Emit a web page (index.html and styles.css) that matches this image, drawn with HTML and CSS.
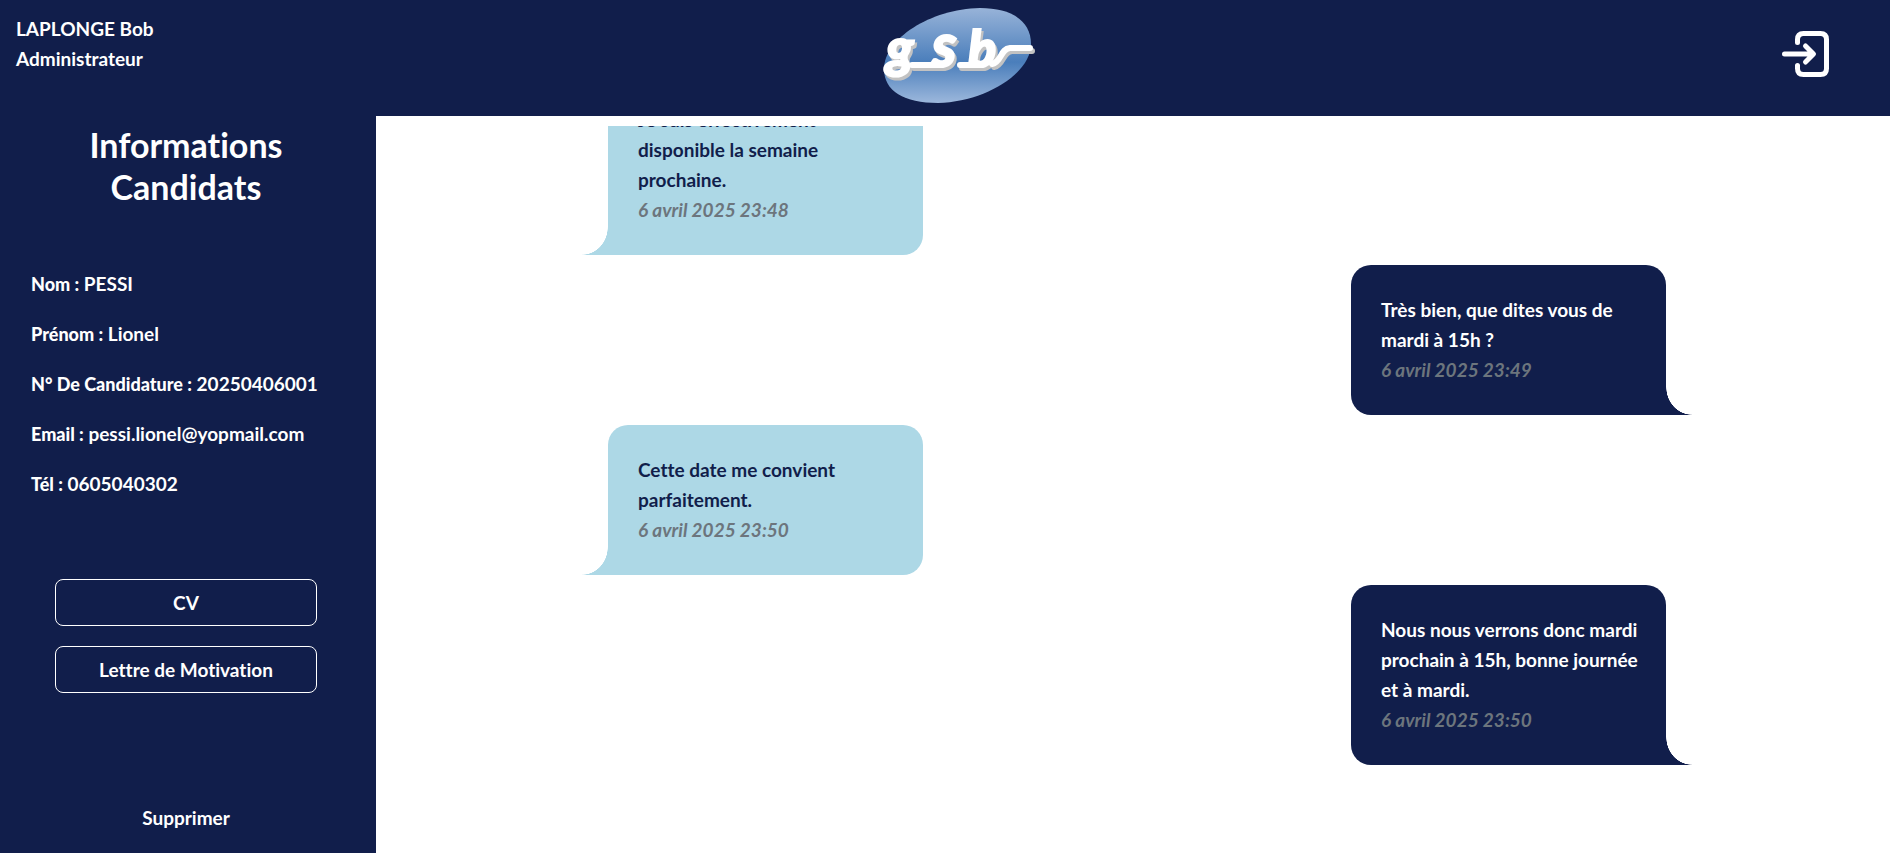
FILE: index.html
```html
<!DOCTYPE html>
<html lang="fr">
<head>
<meta charset="utf-8">
<title>GSB - Candidature</title>
<link rel="stylesheet" href="styles.css">
</head>
<body>
<header class="topbar">
  <div class="user">
    <p>LAPLONGE Bob</p>
    <p>Administrateur</p>
  </div>
  <a class="logo" href="#" aria-label="Accueil">
    <svg width="156" height="100" viewBox="0 0 156 100">
      <defs>
        <linearGradient id="oval" gradientUnits="userSpaceOnUse" x1="0" y1="3" x2="0" y2="98">
          <stop offset="0" stop-color="#99b4d9"/>
          <stop offset=".58" stop-color="#4a7ebb"/>
          <stop offset="1" stop-color="#9ab6db"/>
        </linearGradient>
        <filter id="relief" x="-10%" y="-10%" width="120%" height="130%">
          <feDropShadow dx="2" dy="3" stdDeviation="0" flood-color="#c2c2c2"/>
        </filter>
      </defs>
      <path d="M4 65C4 35 50 5 100 4C132 4 151 17 151 40C151 70 104 98 58 99C24 99 4 87 4 65Z" fill="url(#oval)"/>
      <g filter="url(#relief)">
        <path class="swash" d="M32 61H62M80 61H102"/>
        <path class="swash" d="M112 60C122 58 120 45 130 44H150"/>
        <text class="logo-text" y="63"><tspan class="logo-g" x="6">g</tspan><tspan class="logo-s" x="52">s</tspan><tspan class="logo-b" x="88">b</tspan></text>
      </g>
    </svg>
  </a>
  <a class="logout" href="#" aria-label="Déconnexion">
    <svg width="50" height="50" viewBox="0 0 50 50" fill="none" stroke="#fff" stroke-width="5" stroke-linecap="round" stroke-linejoin="round">
      <path d="M17.500 13.500V10.500Q17.500 4.500 23.500 4.500H40.500Q46.500 4.500 46.500 10.500V39.500Q46.500 45.500 40.500 45.500H23.500Q17.500 45.500 17.500 39.500V36.500"/>
      <path d="M4.500 25H33M25.500 17L33.500 25L25.500 33"/>
    </svg>
  </a>
</header>
<div class="page">
  <aside class="sidebar">
    <h1>Informations<br>Candidats</h1>
    <ul class="infos">
      <li><strong>Nom :</strong> PESSI</li>
      <li><strong>Prénom :</strong> Lionel</li>
      <li><strong>N° De Candidature :</strong> 20250406001</li>
      <li><strong>Email :</strong> pessi.lionel@yopmail.com</li>
      <li><strong>Tél :</strong> 0605040302</li>
    </ul>
    <div class="documents">
      <button type="button" class="document">CV</button>
      <button type="button" class="document">Lettre de Motivation</button>
    </div>
    <button type="button" class="delete">Supprimer</button>
  </aside>
  <main class="chat">
    <article class="bubble received">
      <p>Je suis effectivement disponible la semaine prochaine.</p>
      <time>6 avril 2025 23:48</time>
    </article>
    <article class="bubble sent">
      <p>Très bien, que dites vous de mardi à 15h ?</p>
      <time>6 avril 2025 23:49</time>
    </article>
    <article class="bubble received">
      <p>Cette date me convient parfaitement.</p>
      <time>6 avril 2025 23:50</time>
    </article>
    <article class="bubble sent">
      <p>Nous nous verrons donc mardi prochain à 15h, bonne journée et à mardi.</p>
      <time>6 avril 2025 23:50</time>
    </article>
  </main>
</div>
</body>
</html>
```
FILE: styles.css
```css
* { box-sizing: border-box; }
html, body { height: 100%; }
body {
  margin: 0;
  display: flex;
  flex-direction: column;
  background: #fff;
  color: #fff;
  font: 700 19px/30px Lato, "Open Sans", sans-serif;
  font-variant-ligatures: none;
  overflow: hidden;
}
p, h1, ul { margin: 0; padding: 0; }
button { font: inherit; color: inherit; background: none; border: 0; cursor: pointer; }

.topbar {
  flex: none;
  display: grid;
  grid-template-columns: 1fr auto 1fr;
  background: #111e4b;
  padding: 4px 60px 12px 16px;
}
.user { padding-top: 10px; }
.logo { display: block; height: 100px; margin-left: 70px; }
.logo-text {
  font: italic 900 48px/1 Lato, sans-serif;
  fill: #fff;
  stroke: #fff;
  stroke-width: 2;
}
.logo-g { font-size: 54px; }
.logo-s { font-size: 60px; }
.logo-b { font-size: 52px; }
.swash { fill: none; stroke: #fff; stroke-width: 6; stroke-linejoin: round; stroke-linecap: round; }
.logout { justify-self: end; align-self: center; height: 50px; }

.page { flex: 1; min-height: 0; display: flex; }
.sidebar {
  flex: 0 0 376px;
  display: flex;
  flex-direction: column;
  align-items: center;
  background: #111e4b;
  padding: 8px 4px 20px 0;
}
h1 { font-size: 34px; line-height: 42px; text-align: center; }
.infos {
  align-self: stretch;
  list-style: none;
  display: grid;
  gap: 20px;
  padding: 61px 0 0 31px;
}
.infos li { height: 30px; }
.infos strong { font-size: 18px; font-weight: 900; }
.documents {
  width: 262px;
  display: grid;
  gap: 20px;
  margin-top: 80px;
}
.document { height: 47px; border: 1px solid #fff; border-radius: 8px; }
.delete { margin-top: auto; padding: 0; }

.chat {
  flex: 1;
  min-width: 0;
  margin-top: 10px;
  display: flex;
  flex-direction: column;
  justify-content: flex-end;
  gap: 10px;
  overflow: hidden;
  padding: 0 224px 88px 232px;
}
.bubble {
  position: relative;
  width: 315px;
  padding: 30px 24px 30px 30px;
  border-radius: 20px;
}
.bubble time { display: block; font-style: italic; color: #6c757d; }
.bubble::after {
  content: "";
  position: absolute;
  bottom: 0;
  width: 26px;
  height: 28px;
}
.received { background: #add8e6; color: #111e4b; border-bottom-left-radius: 0; }
.received::after {
  right: 100%;
  background: radial-gradient(ellipse 26px 28px at 0 0, transparent 98%, #add8e6 100%);
}
.sent { align-self: flex-end; background: #111e4b; border-bottom-right-radius: 0; }
.sent::after {
  left: 100%;
  background: radial-gradient(ellipse 26px 28px at 100% 0, transparent 98%, #111e4b 100%);
}
```
